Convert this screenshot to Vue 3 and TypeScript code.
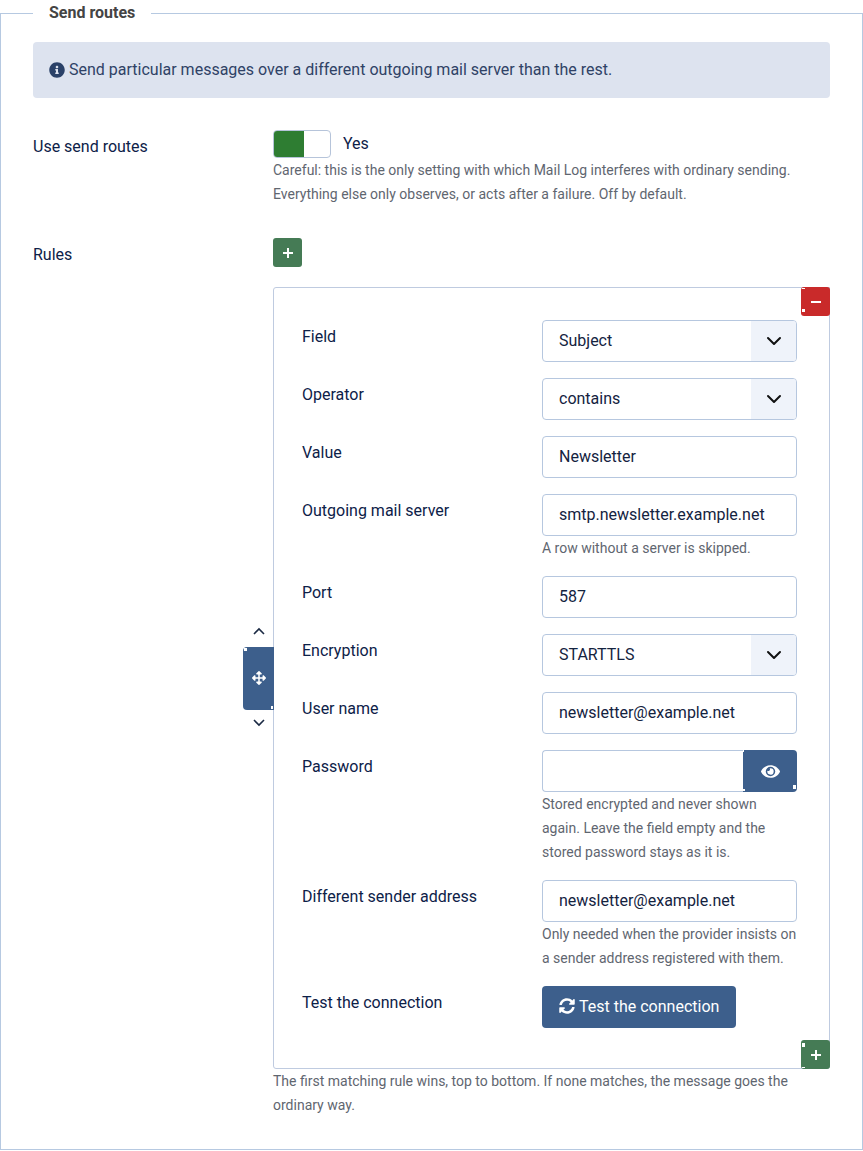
<script setup lang="ts">
const info = 'M256 8C119.043 8 8 119.083 8 256c0 136.997 111.043 248 248 248s248-111.003 248-248C504 119.083 392.957 8 256 8zm0 110c23.196 0 42 18.804 42 42s-18.804 42-42 42-42-18.804-42-42 18.804-42 42-42zm56 254c0 6.627-5.373 12-12 12h-88c-6.627 0-12-5.373-12-12v-24c0-6.627 5.373-12 12-12h12v-64h-12c-6.627 0-12-5.373-12-12v-24c0-6.627 5.373-12 12-12h64c6.627 0 12 5.373 12 12v100h12c6.627 0 12 5.373 12 12v24z'
const sync = 'M370.72 133.28C339.458 104.008 298.888 87.962 255.848 88c-77.458.068-144.328 53.178-162.791 126.85-1.344 5.363-6.122 9.15-11.651 9.15H24.103c-7.498 0-13.194-6.807-11.807-14.176C33.933 94.924 134.813 8 256 8c66.448 0 126.791 26.136 171.315 68.685L463.03 40.97C478.149 25.851 504 36.559 504 57.941V192c0 13.255-10.745 24-24 24H345.941c-21.382 0-32.09-25.851-16.971-40.971l41.75-41.749zM32 296h134.059c21.382 0 32.09 25.851 16.971 40.971l-41.75 41.75c31.262 29.273 71.835 45.319 114.876 45.28 77.418-.07 144.315-53.144 162.787-126.849 1.344-5.363 6.122-9.15 11.651-9.15h57.304c7.498 0 13.194 6.807 11.807 14.176C478.067 417.076 377.187 504 256 504c-66.448 0-126.791-26.136-171.315-68.685L48.97 471.03C33.851 486.149 8 475.441 8 454.059V320c0-13.255 10.745-24 24-24z'
const eye = 'M572.52 241.4C518.29 135.59 410.93 64 288 64S57.68 135.64 3.48 241.41a32.35 32.35 0 0 0 0 29.19C57.71 376.41 165.07 448 288 448s230.32-71.64 284.52-177.41a32.35 32.35 0 0 0 0-29.19zM288 400a144 144 0 1 1 144-144 143.93 143.93 0 0 1-144 144zm0-240a95.31 95.31 0 0 0-25.31 3.79 47.85 47.85 0 0 1-66.9 66.9A95.78 95.78 0 1 0 288 160z'
const move = 'M352.201 425.775l-79.196 79.196c-9.373 9.373-24.568 9.373-33.941 0l-79.196-79.196c-15.119-15.119-4.411-40.971 16.971-40.97h51.162L228 284H127.196v51.162c0 21.382-25.851 32.09-40.971 16.971L7.029 272.937c-9.373-9.373-9.373-24.569 0-33.941L86.225 159.8c15.119-15.119 40.971-4.411 40.971 16.971V228H228V127.196h-51.23c-21.382 0-32.09-25.851-16.971-40.971l79.196-79.196c9.373-9.373 24.568-9.373 33.941 0l79.196 79.196c15.119 15.119 4.411 40.971-16.971 40.971h-51.162V228h100.804v-51.162c0-21.382 25.851-32.09 40.97-16.971l79.196 79.196c9.373 9.373 9.373 24.569 0 33.941L425.773 352.2c-15.119 15.119-40.971 4.411-40.97-16.971V284H284v100.804h51.23c21.382 0 32.09 25.851 16.971 40.971z'
</script>

<template>
  <fieldset class="panel">
    <legend>Send routes</legend>

    <div class="alert">
      <svg class="icon" viewBox="0 0 512 512"><path :d="info" /></svg>
      <span>Send particular messages over a different outgoing mail server than the rest.</span>
    </div>

    <div class="row">
      <label class="label">Use send routes</label>
      <div class="control">
        <div class="switch-line">
          <div class="switch"><span class="switch-on"></span></div>
          <span class="switch-text">Yes</span>
        </div>
        <p class="help">Careful: this is the only setting with which Mail Log interferes with ordinary sending. Everything else only observes, or acts after a failure. Off by default.</p>
      </div>
    </div>

    <div class="row">
      <label class="label">Rules</label>
      <div class="control">
        <button class="square green" type="button">
          <svg class="glyph" viewBox="0 0 12 12"><path d="M6 1v10M1 6h10" /></svg>
        </button>

        <div class="subform">
          <div class="mover">
            <svg class="chev up" viewBox="0 0 16 16"><path d="M3 11l5-5 5 5" /></svg>
            <button class="grip" type="button">
              <svg class="move-icon" viewBox="0 0 512 512"><path :d="move" /></svg>
              <span class="speck grip-a"></span>
              <span class="speck grip-b"></span>
            </button>
            <svg class="chev down" viewBox="0 0 16 16"><path d="M3 5l5 5 5-5" /></svg>
          </div>

          <button class="square red remove" type="button">
            <svg class="glyph" viewBox="0 0 12 12"><path d="M1 6h10" /></svg>
            <span class="speck rem-a"></span>
            <span class="speck rem-b"></span>
          </button>

          <div class="field">
            <label class="field-label">Field</label>
            <div class="field-control">
              <div class="select">
                <span>Subject</span>
                <span class="select-arrow"><svg viewBox="0 0 16 16"><path d="M2 5l6 6 6-6" /></svg></span>
              </div>
            </div>
          </div>
          <div class="field">
            <label class="field-label">Operator</label>
            <div class="field-control">
              <div class="select">
                <span>contains</span>
                <span class="select-arrow"><svg viewBox="0 0 16 16"><path d="M2 5l6 6 6-6" /></svg></span>
              </div>
            </div>
          </div>
          <div class="field">
            <label class="field-label">Value</label>
            <div class="field-control"><input class="input" type="text" value="Newsletter" /></div>
          </div>
          <div class="field">
            <label class="field-label">Outgoing mail server</label>
            <div class="field-control">
              <input class="input" type="text" value="smtp.newsletter.example.net" />
              <p class="help">A row without a server is skipped.</p>
            </div>
          </div>
          <div class="field">
            <label class="field-label">Port</label>
            <div class="field-control"><input class="input" type="text" value="587" /></div>
          </div>
          <div class="field">
            <label class="field-label">Encryption</label>
            <div class="field-control">
              <div class="select">
                <span>STARTTLS</span>
                <span class="select-arrow"><svg viewBox="0 0 16 16"><path d="M2 5l6 6 6-6" /></svg></span>
              </div>
            </div>
          </div>
          <div class="field">
            <label class="field-label">User name</label>
            <div class="field-control"><input class="input" type="text" value="newsletter@example.net" /></div>
          </div>
          <div class="field">
            <label class="field-label">Password</label>
            <div class="field-control">
              <div class="input-group">
                <input class="input joined" type="password" />
                <button class="eye" type="button">
                  <svg viewBox="0 0 576 512"><path :d="eye" /></svg>
                  <span class="speck eye-a"></span>
                  <span class="speck eye-b"></span>
                  <span class="speck eye-c"></span>
                </button>
              </div>
              <p class="help">Stored encrypted and never shown again. Leave the field empty and the stored password stays as it is.</p>
            </div>
          </div>
          <div class="field">
            <label class="field-label">Different sender address</label>
            <div class="field-control">
              <input class="input" type="text" value="newsletter@example.net" />
              <p class="help">Only needed when the provider insists on a sender address registered with them.</p>
            </div>
          </div>
          <div class="field last">
            <label class="field-label">Test the connection</label>
            <div class="field-control">
              <button class="test" type="button">
                <svg viewBox="0 0 512 512"><path :d="sync" /></svg>
                <span>Test the connection</span>
              </button>
            </div>
          </div>

          <button class="square green add-bottom" type="button">
            <svg class="glyph" viewBox="0 0 12 12"><path d="M6 1v10M1 6h10" /></svg>
            <span class="speck add-a"></span>
            <span class="speck add-b"></span>
          </button>
        </div>

        <p class="help">The first matching rule wins, top to bottom. If none matches, the message goes the ordinary way.</p>
      </div>
    </div>
  </fieldset>
</template>

<style>
html, body { margin: 0; background: #fff; }
</style>

<style scoped>
.panel {
  box-sizing: border-box;
  width: 863px;
  height: 1150px;
  margin: 0;
  padding: 0 32px 32px;
  border: 1px solid #b6c9e1;
  font-family: Roboto, "Liberation Sans", sans-serif;
  font-size: 16px;
  line-height: 24px;
  color: #0d2148;
}
legend {
  padding: 0 16px;
  font-weight: 700;
  font-size: 16px;
  line-height: 26px;
  color: #444;
}
.alert {
  display: flex;
  align-items: center;
  gap: 4px;
  margin: 16px 0 32px;
  padding: 16px;
  background: #dde3ef;
  border-radius: 4px;
  color: #2f4266;
}
.icon { width: 16px; height: 16px; fill: #2a4168; flex: none; }
.row { display: flex; margin-bottom: 32px; }
.row:last-child { margin-bottom: 0; }
.label { width: 240px; flex: none; padding-top: 5px; }
.control { width: 557px; flex: none; }
.switch-line { display: flex; }
.switch {
  box-sizing: border-box;
  width: 58px;
  height: 28px;
  border: 1px solid #b6c4da;
  border-radius: 4px;
  overflow: hidden;
}
.switch-on { display: block; width: 30px; height: 100%; background: #2e7d32; }
.switch-text { margin-left: 12px; line-height: 27px; }
.help { margin: 0; font-size: 14px; line-height: 24px; color: #5f6670; }
.square {
  position: relative;
  display: flex;
  align-items: center;
  justify-content: center;
  width: 29px;
  height: 29px;
  padding: 0;
  border: 0;
  border-radius: 3px;
}
.green { background: #457b55; }
.red { background: #c92a2a; }
.glyph { width: 12px; height: 12px; fill: none; stroke: #fff; stroke-width: 2; }
.subform {
  position: relative;
  box-sizing: border-box;
  margin-top: 20px;
  height: 782px;
  padding: 32px 32px 40px 28px;
  border: 1px solid #bfcbe0;
  border-radius: 3px 0 3px 3px;
}
.remove { position: absolute; top: -1px; right: -1px; }
.add-bottom { position: absolute; right: -1px; bottom: -1px; }
.mover {
  position: absolute;
  left: -31px;
  top: 333px;
  width: 31px;
  height: 111px;
}
.chev { position: absolute; left: 8px; width: 16px; height: 16px; fill: none; stroke: #1b2a44; stroke-width: 1.6; }
.chev.up { top: 2px; }
.chev.down { bottom: 1px; }
.grip {
  position: absolute;
  top: 26px;
  left: 0;
  display: flex;
  align-items: center;
  justify-content: center;
  width: 31px;
  height: 63px;
  padding: 0 0 2px;
  border: 0;
  border-radius: 4px 0 0 4px;
  background: #3d5f8c;
}
.move-icon { width: 14px; height: 14px; fill: #fff; }
.field { display: flex; margin-bottom: 16px; }
.field.last { margin-bottom: 0; }
.field-label { width: 240px; flex: none; padding-top: 5px; }
.field-control { width: 255px; flex: none; }
.input, .select {
  box-sizing: border-box;
  display: block;
  width: 100%;
  height: 42px;
  padding: 0 16px;
  border: 1px solid #b6c7df;
  border-radius: 4px;
  background: #fff;
  font-family: inherit;
  font-size: 16px;
  line-height: 40px;
  color: #14233f;
  outline: none;
}
.input { padding-bottom: 2px; }
.select { position: relative; }
.select-arrow {
  position: absolute;
  top: 0;
  right: 0;
  bottom: 0;
  display: flex;
  align-items: center;
  justify-content: center;
  width: 45px;
  background: #eff3fa;
  border-radius: 0 3px 3px 0;
}
.select-arrow svg { width: 16px; height: 16px; fill: none; stroke: #111; stroke-width: 2; stroke-linecap: round; stroke-linejoin: round; }
.input-group { display: flex; }
.joined { width: 201px; border-radius: 4px 0 0 4px; border-right: 0; }
.eye {
  position: relative;
  display: flex;
  align-items: center;
  justify-content: center;
  width: 54px;
  height: 42px;
  padding: 0;
  border: 0;
  border-radius: 0 4px 4px 0;
  background: #3d5f8c;
}
.eye svg { width: 19px; height: 17px; fill: #fff; }
.test {
  display: flex;
  align-items: center;
  gap: 4px;
  height: 42px;
  width: 194px;
  padding: 0 17px 2px;
  border: 0;
  border-radius: 4px;
  background: #3d5f8c;
  color: #fff;
  font-family: inherit;
  font-size: 16px;
  white-space: nowrap;
}
.test svg { width: 16px; height: 16px; fill: #fff; flex: none; }
.speck { position: absolute; background: #fff; }
.grip-a { left: 1px; top: 1px; width: 3px; height: 3px; }
.grip-b { right: 1px; bottom: 1px; width: 2px; height: 3px; }
.rem-a { left: 1px; top: 1px; width: 3px; height: 1px; }
.rem-b { left: 1px; top: 22px; width: 3px; height: 3px; }
.eye-a { left: 0; top: 0; width: 1px; height: 2px; }
.eye-b { left: 0; bottom: 1px; width: 2px; height: 2px; }
.eye-c { right: 1px; bottom: 3px; width: 3px; height: 4px; }
.add-a { left: 1px; top: 3px; width: 3px; height: 4px; }
.add-b { left: 1px; bottom: 1px; width: 3px; height: 1px; }
</style>
